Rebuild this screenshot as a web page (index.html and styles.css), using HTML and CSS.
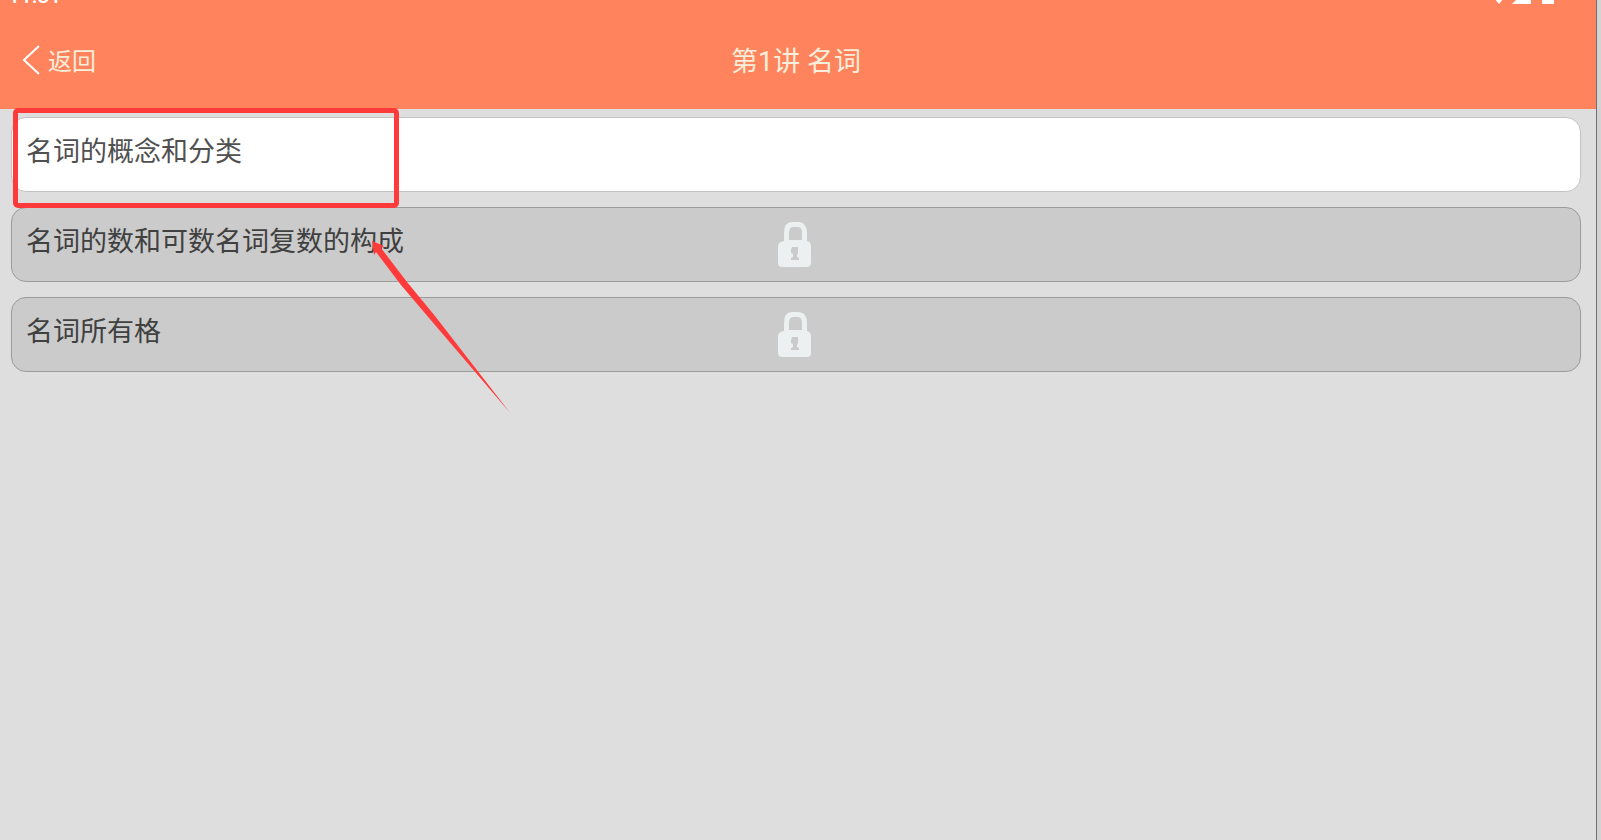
FILE: index.html
```html
<!DOCTYPE html>
<html lang="zh-CN">
<head>
<meta charset="utf-8">
<title>第1讲 名词</title>
<link rel="stylesheet" href="styles.css">
</head>
<body>
<div class="screen">
  <header class="header">
    <div class="status">
      <span class="clock">11:31</span>
      <svg class="status-icons" width="66" height="20" viewBox="0 0 66 20" aria-hidden="true">
        <path d="M0 7Q11-3 22 7L11 20Z"/>
        <path d="M24 20L43 1V20Z"/>
        <path d="M54 3h3V1h6v2h3v17H54Z"/>
      </svg>
    </div>
    <nav class="bar">
      <button class="back" type="button">
        <svg width="18" height="30" viewBox="0 0 18 30" aria-hidden="true"><path d="M17 1L2 15L17 29"/></svg>
        <span>返回</span>
      </button>
      <h1 class="title">第1讲 名词</h1>
    </nav>
  </header>
  <main class="lessons">
    <button class="lesson" type="button"><span>名词的概念和分类</span></button>
    <button class="lesson locked" type="button">
      <span>名词的数和可数名词复数的构成</span>
      <svg class="lock" width="34" height="46" viewBox="0 0 34 46" aria-hidden="true"><path fill-rule="evenodd" d="M6 19V11Q6 0 14 0H21Q29 1 29 11V19Q33 20 33 24V41Q33 45 29 45H4Q0 45 0 41V24Q0 20 6 19ZM11 18H24V11Q24 5 20 5H15Q11 5 11 11ZM14 25H20V31L19 33V35L21 36V38H13V36L15 35V32L13 31V28Z"/></svg>
    </button>
    <button class="lesson locked" type="button">
      <span>名词所有格</span>
      <svg class="lock" width="34" height="46" viewBox="0 0 34 46" aria-hidden="true"><path fill-rule="evenodd" d="M6 19V11Q6 0 14 0H21Q29 1 29 11V19Q33 20 33 24V41Q33 45 29 45H4Q0 45 0 41V24Q0 20 6 19ZM11 18H24V11Q24 5 20 5H15Q11 5 11 11ZM14 25H20V31L19 33V35L21 36V38H13V36L15 35V32L13 31V28Z"/></svg>
    </button>
  </main>
  <div class="highlight"></div>
  <svg class="arrow" width="140" height="174" viewBox="0 0 140 174" aria-hidden="true"><path d="M0 0L12 5L9 7L35 41L63 75L139 173L57 77L29 44L4 11L2 14Z"/></svg>
</div>
</body>
</html>
```
FILE: styles.css
```css
* {
  box-sizing: border-box;
}

body {
  margin: 0;
  padding-right: 4px;
  background: #d3d3d3;
  font-family: "Noto Sans CJK SC", sans-serif;
}

button {
  margin: 0;
  border: 0;
  background: none;
  font: inherit;
  text-align: left;
}

.screen {
  position: relative;
  min-height: 100vh;
  border-right: 1px solid #707070;
  background: #dedede;
}

.header {
  height: 109px;
  overflow: hidden;
  background: #ff835c;
}

.status {
  display: flex;
  align-items: flex-end;
  justify-content: space-between;
  height: 20px;
  margin-top: -16px;
  padding: 0 42px 0 8px;
}

.clock {
  color: #fff;
  font: 500 21px/16px Roboto, sans-serif;
}

.status-icons {
  fill: #fff;
}

.bar {
  display: grid;
  grid-template-columns: 1fr auto 1fr;
  align-items: center;
  height: 112px;
  padding: 0 26px 0 22px;
}

.back {
  display: flex;
  align-items: center;
  gap: 8px;
  padding: 0;
  color: #f7eedb;
  font-size: 24px;
  line-height: 32px;
}

.back svg {
  fill: none;
  stroke: #fff;
  stroke-width: 2;
}

.title {
  margin: 0;
  padding-top: 4px;
  color: #f7eedb;
  font-family: Roboto, "Noto Sans CJK SC", sans-serif;
  font-size: 27px;
  font-weight: 400;
  line-height: 36px;
}

.lessons {
  display: flex;
  flex-direction: column;
  gap: 15px;
  padding: 8px 15px 8px 11px;
}

.lesson {
  display: grid;
  grid-template-columns: 1fr auto 1fr;
  height: 75px;
  padding: 14px 16px 14px 14px;
  border: 1px solid #c3c3c3;
  border-radius: 15px;
  background: #fff;
  color: #505050;
  font-size: 27px;
  line-height: 36px;
  white-space: nowrap;
}

.locked {
  border-color: #9b9b9b;
  background: #cbcbcb;
  color: #404040;
}

.lock {
  fill: #ecf0f1;
}

.highlight {
  position: absolute;
  top: 108px;
  left: 13px;
  width: 386px;
  height: 100px;
  border: 5px solid #ff3a3a;
  border-radius: 5px;
}

.arrow {
  position: absolute;
  top: 241px;
  left: 372px;
  fill: #ff3a3a;
}
```
